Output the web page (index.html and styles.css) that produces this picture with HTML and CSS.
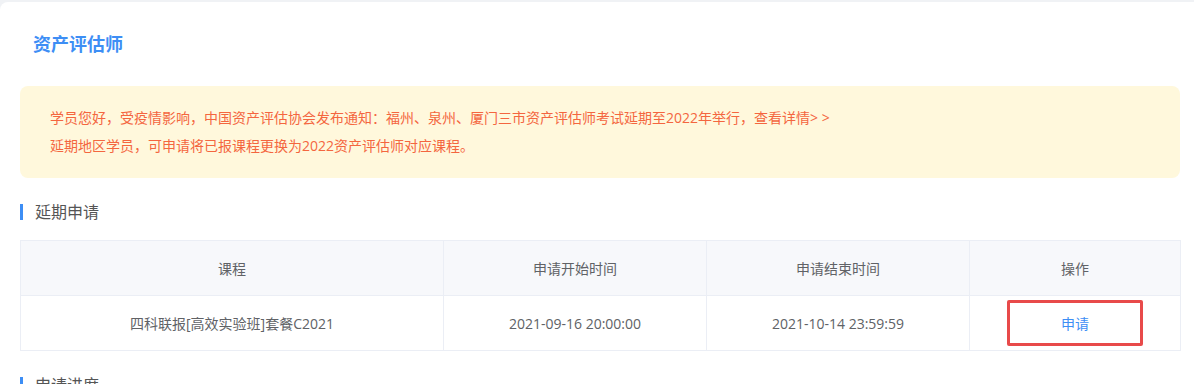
FILE: index.html
```html
<!DOCTYPE html>
<html lang="zh-CN">
<head>
<meta charset="utf-8">
<title>资产评估师</title>
<link rel="stylesheet" href="styles.css">
</head>
<body>
<div class="card">
  <h1 class="title">资产评估师</h1>
  <div class="notice">
    <p>学员您好，受疫情影响，中国资产评估协会发布通知：福州、泉州、厦门三市资产评估师考试延期至2022年举行，查看详情&gt; &gt;</p>
    <p>延期地区学员，可申请将已报课程更换为2022资产评估师对应课程。</p>
  </div>
  <div class="section-head"><span class="bar"></span>延期申请</div>
  <table class="grid">
    <colgroup>
      <col class="c1"><col class="c2"><col class="c3"><col class="c4">
    </colgroup>
    <thead>
      <tr><th>课程</th><th>申请开始时间</th><th>申请结束时间</th><th>操作</th></tr>
    </thead>
    <tbody>
      <tr>
        <td>四科联报[高效实验班]套餐C2021</td>
        <td>2021-09-16 20:00:00</td>
        <td>2021-10-14 23:59:59</td>
        <td><a class="apply">申请</a></td>
      </tr>
    </tbody>
  </table>
  <div class="section-head"><span class="bar"></span>申请进度</div>
</div>
</body>
</html>
```

FILE: styles.css
```css
html, body {
  margin: 0;
  padding: 0;
}
body {
  background: #f0f2f5;
  font-family: "Microsoft YaHei", "Open Sans", "Noto Sans CJK SC", sans-serif;
  font-size: 14px;
  color: #606266;
  overflow: hidden;
  height: 384px;
}
.card {
  margin-top: 2px;
  background: #fff;
  border-radius: 8px 0 0 0;
  padding: 0 14px 40px 20px;
  width: 1160px;
}
.title {
  margin: 0;
  padding: 30px 0 30px 13px;
  font-size: 18px;
  line-height: 24px;
  font-weight: bold;
  color: #3d8ef5;
}
.notice {
  background: #fff8dc;
  border-radius: 8px;
  padding: 18px 30px;
  color: #f4663f;
  font-size: 14px;
  line-height: 28px;
}
.notice p {
  margin: 0;
}
.section-head {
  margin-top: 22px;
  display: flex;
  align-items: center;
  gap: 12px;
  height: 24px;
  line-height: 24px;
  font-size: 16px;
  color: #555;
}
.bar {
  width: 3px;
  height: 16px;
  background: #3d8ef5;
}
.grid {
  margin-top: 16px;
  width: 1160px;
  border-collapse: collapse;
  table-layout: fixed;
  border: 1px solid #ebeef5;
}
.c1 { width: 423px; }
.c2 { width: 263px; }
.c3 { width: 263px; }
.c4 { width: 211px; }
.grid th, .grid td {
  border: 1px solid #ebeef5;
  height: 54px;
  padding: 0;
  text-align: center;
  font-weight: normal;
  font-size: 14px;
  color: #606266;
}
.grid th {
  background: #f7f8fb;
}
.apply {
  display: inline-flex;
  align-items: center;
  justify-content: center;
  width: 130px;
  height: 40px;
  border: 3px solid #e84a4a;
  border-radius: 2px;
  color: #3d8ef5;
  vertical-align: middle;
}
```
